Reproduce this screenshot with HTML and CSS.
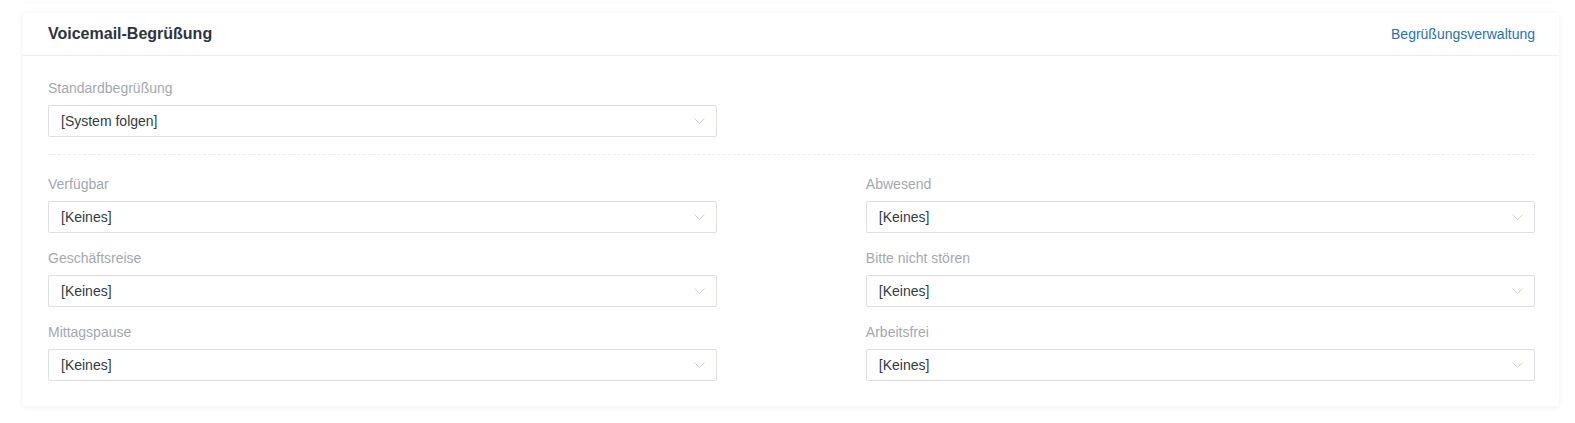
FILE: index.html
```html
<!DOCTYPE html>
<html lang="de">
<head>
<meta charset="utf-8">
<link rel="stylesheet" href="styles.css">
</head>
<body>
<div class="page">
  <div class="prev-card"></div>
  <section class="card">
    <header class="card-header">
      <h2 class="card-title">Voicemail-Begrüßung</h2>
      <a class="card-link" href="#">Begrüßungsverwaltung</a>
    </header>
    <div class="card-body">
      <div class="grid">
        <div class="field">
          <label class="field-label">Standardbegrüßung</label>
          <div class="select"><span class="select-value">[System folgen]</span><svg class="chev" width="11" height="7" viewBox="0 0 11 7"><polyline points="0.5,0.5 5.5,5.5 10.5,0.5" fill="none" stroke="#d4d4d4" stroke-width="1"/></svg></div>
        </div>
      </div>
      <div class="divider"></div>
      <div class="grid">
        <div class="field">
          <label class="field-label">Verfügbar</label>
          <div class="select"><span class="select-value">[Keines]</span><svg class="chev" width="11" height="7" viewBox="0 0 11 7"><polyline points="0.5,0.5 5.5,5.5 10.5,0.5" fill="none" stroke="#d4d4d4" stroke-width="1"/></svg></div>
        </div>
        <div class="field">
          <label class="field-label">Abwesend</label>
          <div class="select"><span class="select-value">[Keines]</span><svg class="chev" width="11" height="7" viewBox="0 0 11 7"><polyline points="0.5,0.5 5.5,5.5 10.5,0.5" fill="none" stroke="#d4d4d4" stroke-width="1"/></svg></div>
        </div>
        <div class="field">
          <label class="field-label">Geschäftsreise</label>
          <div class="select"><span class="select-value">[Keines]</span><svg class="chev" width="11" height="7" viewBox="0 0 11 7"><polyline points="0.5,0.5 5.5,5.5 10.5,0.5" fill="none" stroke="#d4d4d4" stroke-width="1"/></svg></div>
        </div>
        <div class="field">
          <label class="field-label">Bitte nicht stören</label>
          <div class="select"><span class="select-value">[Keines]</span><svg class="chev" width="11" height="7" viewBox="0 0 11 7"><polyline points="0.5,0.5 5.5,5.5 10.5,0.5" fill="none" stroke="#d4d4d4" stroke-width="1"/></svg></div>
        </div>
        <div class="field">
          <label class="field-label">Mittagspause</label>
          <div class="select"><span class="select-value">[Keines]</span><svg class="chev" width="11" height="7" viewBox="0 0 11 7"><polyline points="0.5,0.5 5.5,5.5 10.5,0.5" fill="none" stroke="#d4d4d4" stroke-width="1"/></svg></div>
        </div>
        <div class="field">
          <label class="field-label">Arbeitsfrei</label>
          <div class="select"><span class="select-value">[Keines]</span><svg class="chev" width="11" height="7" viewBox="0 0 11 7"><polyline points="0.5,0.5 5.5,5.5 10.5,0.5" fill="none" stroke="#d4d4d4" stroke-width="1"/></svg></div>
        </div>
      </div>
    </div>
  </section>
</div>
</body>
</html>
```

FILE: styles.css
```css
* { box-sizing: border-box; }
html, body { margin: 0; padding: 0; background: #fff; }
body {
  font-family: "Liberation Sans", Arial, sans-serif;
  color: #333;
  width: 1575px;
  height: 423px;
  overflow: hidden;
}
.page {
  padding: 0 16px 0 23px;
}
.prev-card {
  height: 1px;
  background: #fff;
  box-shadow: 0 1px 4px rgba(0, 0, 0, 0.06);
}
.card {
  margin-top: 12px;
  background: #fff;
  border-radius: 2px;
  box-shadow: 0 1px 6px rgba(0, 0, 0, 0.07);
}
.card-header {
  display: flex;
  align-items: center;
  justify-content: space-between;
  height: 43px;
  padding: 0 24px 0 25px;
  border-bottom: 1px solid #ebedf0;
}
.card-title {
  margin: 0;
  font-size: 16px;
  font-weight: bold;
  color: #2c3440;
}
.card-link {
  font-size: 14px;
  color: #1f72b3;
  text-decoration: none;
}
.card-body {
  padding: 23px 24px 25px 25px;
}
.grid {
  display: grid;
  grid-template-columns: 45% 45%;
  justify-content: space-between;
  row-gap: 16px;
}
.field {
  display: flex;
  flex-direction: column;
}
.field-label {
  font-size: 14px;
  line-height: 18px;
  color: #a4a8b0;
  margin-bottom: 8px;
}
.select {
  display: flex;
  align-items: center;
  justify-content: space-between;
  height: 32px;
  padding: 0 11px 0 12px;
  border: 1px solid #dcdfe3;
  border-radius: 2px;
  background: #fff;
}
.select-value {
  font-size: 14px;
  color: #333a44;
}
.chev {
  display: block;
  margin-top: 1px;
}
.divider {
  margin: 17px 0 20px;
  border-top: 1px dashed #eceef1;
}
```
